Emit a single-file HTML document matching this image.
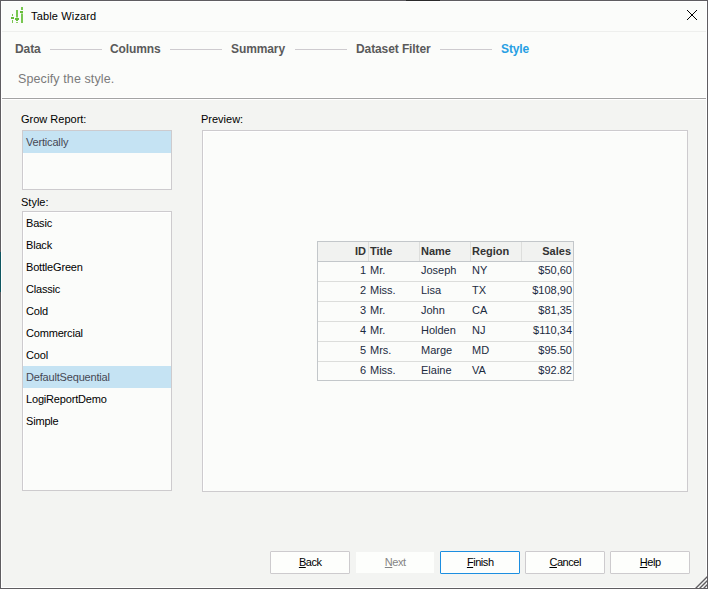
<!DOCTYPE html>
<html><head><meta charset="utf-8">
<style>
*{margin:0;padding:0;box-sizing:border-box}
html,body{width:708px;height:589px;overflow:hidden;background:#f3f4f2;font-family:"Liberation Sans",sans-serif;color:#000}
.abs{position:absolute}
#top{position:absolute;left:0;top:0;width:708px;height:98px;background:#fbfcfa}
#bl{left:0;top:0;width:1px;height:589px;background:#5f5d61}
#bt{left:0;top:0;width:708px;height:1px;background:#5f5d61}
#br{left:707px;top:0;width:1px;height:589px;background:#5f5d61}
#inner{left:1px;top:1px;width:706px;height:587px;border:1px solid #fff}
#tline{left:2px;top:31px;width:704px;height:1px;background:#eeefed}
#sep{left:1px;top:97px;width:706px;height:3px;background:#fff;border-top:1px solid #fff;border-bottom:1px solid #fff}
#sep::after{content:"";position:absolute;left:1px;top:0;width:704px;height:1px;background:#a3a3a3}
.title{left:31px;top:10px;font-size:11px;color:#000;letter-spacing:0.15px}
.step{top:42px;font-size:12px;font-weight:bold;color:#5a5a5a;letter-spacing:-0.1px}
.sline{top:49px;height:1px;width:52px;background:#cecbcf}
.spec{left:18px;top:72px;font-size:12.5px;color:#7a7a7a;letter-spacing:0.1px}
.lbl{font-size:11px;color:#000}
.list{background:#fbfcfa;border:1px solid #cdcbce;box-shadow:inset 1px 1px 0 #fff}
.item{position:absolute;left:0;font-size:11px;padding-left:3px;letter-spacing:-0.18px;height:22px;line-height:22px;width:148px}
.sel{background:#c5e3f3;color:#454854}
#preview{left:202px;top:130px;width:486px;height:362px;background:#fbfcfa;border:1px solid #cdcbce;box-shadow:inset 1px 1px 0 #fff}
table{position:absolute;left:317px;top:241px;border-collapse:collapse;font-size:11px;color:#1f2a44}
.btn{top:551px;width:80px;height:23px;border:1px solid #cdcbce;background:#fdfefc;font-size:11px;letter-spacing:-0.45px;text-indent:0.45px;text-align:center;line-height:21px;border-radius:1px;color:#000}
.btn u{text-decoration:underline;text-decoration-thickness:1px;text-underline-offset:0.5px}
#tbl{left:317px;top:241px;width:257px;height:140px;border:1px solid #c3c7ca;background:#fbfcfa}
#tbl .hdr{position:absolute;left:0;top:0;width:255px;height:20px;background:#f1f2f0;border-bottom:1px solid #c3c7ca}
#tbl .vl{position:absolute;top:0;width:1px;height:19px;background:#dddedc}
#tbl .hl{position:absolute;left:0;width:255px;height:1px;background:#dcdddb}
#tbl .c{position:absolute;height:19px;line-height:18px;font-size:11px;color:#1c2b3f;white-space:nowrap}
#tbl .b{font-weight:bold;color:#333}
#tbl .r{text-align:right}
</style></head><body>
<div id="top"></div>
<div class="abs" id="tline"></div>
<div class="abs" id="sep"></div>
<div class="abs" id="inner"></div>
<div class="abs" id="bt"></div>
<div class="abs" id="bl"></div>
<div class="abs" id="br"></div>
<svg class="abs" style="left:0;top:0" width="30" height="30" viewBox="0 0 30 30" shape-rendering="crispEdges">
<g fill="#78c750">
<rect x="12" y="14" width="1" height="2"/>
<rect x="11" y="17" width="3" height="2" fill="#66bd3a"/>
<rect x="12" y="20" width="1" height="3"/>
<rect x="16" y="10" width="2" height="7"/>
<rect x="16" y="17" width="2" height="1" fill="#b8e0a0"/>
<rect x="15" y="18" width="4" height="2" fill="#66bd3a"/>
<rect x="16" y="20" width="2" height="1" fill="#66bd3a"/>
<rect x="16" y="22" width="2" height="1" fill="#8fd06a"/>
<rect x="21" y="7" width="2" height="3"/>
<rect x="20" y="11" width="3" height="2" fill="#66bd3a"/>
<rect x="21" y="13" width="2" height="1" fill="#b8e0a0"/>
<rect x="21" y="14" width="2" height="9"/>
</g></svg>
<div class="abs title">Table Wizard</div>
<svg class="abs" style="left:686px;top:9px" width="12" height="12" viewBox="0 0 12 12"><path d="M1 1L11 11M11 1L1 11" stroke="#000" stroke-width="1"/></svg>

<div class="abs step" style="left:15px">Data</div>
<div class="abs sline" style="left:50px"></div>
<div class="abs step" style="left:110px">Columns</div>
<div class="abs sline" style="left:170px"></div>
<div class="abs step" style="left:231px">Summary</div>
<div class="abs sline" style="left:295px"></div>
<div class="abs step" style="left:356px">Dataset Filter</div>
<div class="abs sline" style="left:440px"></div>
<div class="abs step" style="left:501px;color:#279fe3">Style</div>
<div class="abs spec">Specify the style.</div>

<div class="abs lbl" style="left:21px;top:113px">Grow Report:</div>
<div class="abs list" style="left:22px;top:130px;width:150px;height:60px">
 <div class="item sel" style="top:0">Vertically</div>
</div>
<div class="abs lbl" style="left:21px;top:196px">Style:</div>
<div class="abs list" style="left:22px;top:211px;width:150px;height:280px">
 <div class="item" style="top:0px">Basic</div>
 <div class="item" style="top:22px">Black</div>
 <div class="item" style="top:44px">BottleGreen</div>
 <div class="item" style="top:66px">Classic</div>
 <div class="item" style="top:88px">Cold</div>
 <div class="item" style="top:110px">Commercial</div>
 <div class="item" style="top:132px">Cool</div>
 <div class="item sel" style="top:154px">DefaultSequential</div>
 <div class="item" style="top:176px">LogiReportDemo</div>
 <div class="item" style="top:198px">Simple</div>
</div>
<div class="abs lbl" style="left:201px;top:113px">Preview:</div>
<div class="abs" id="preview"></div>

<div class="abs" id="tbl">
<div class="hdr"></div>
<div class="vl" style="left:50px"></div><div class="vl" style="left:101px"></div><div class="vl" style="left:152px"></div><div class="vl" style="left:203px"></div>
<div class="hl" style="top:39px"></div><div class="hl" style="top:59px"></div><div class="hl" style="top:79px"></div><div class="hl" style="top:99px"></div><div class="hl" style="top:119px"></div>
<div class="c b r" style="left:0;top:0px;width:48px">ID</div><div class="c b" style="left:52px;top:0px">Title</div><div class="c b" style="left:103px;top:0px">Name</div><div class="c b" style="left:154px;top:0px">Region</div><div class="c b r" style="left:205px;top:0px;width:48px">Sales</div>
<div class="c r" style="left:0;top:19px;width:48px">1</div><div class="c" style="left:52px;top:19px">Mr.</div><div class="c" style="left:103px;top:19px">Joseph</div><div class="c" style="left:154px;top:19px">NY</div><div class="c r" style="left:205px;top:19px;width:49px">$50,60</div>
<div class="c r" style="left:0;top:39px;width:48px">2</div><div class="c" style="left:52px;top:39px">Miss.</div><div class="c" style="left:103px;top:39px">Lisa</div><div class="c" style="left:154px;top:39px">TX</div><div class="c r" style="left:205px;top:39px;width:49px">$108,90</div>
<div class="c r" style="left:0;top:59px;width:48px">3</div><div class="c" style="left:52px;top:59px">Mr.</div><div class="c" style="left:103px;top:59px">John</div><div class="c" style="left:154px;top:59px">CA</div><div class="c r" style="left:205px;top:59px;width:49px">$81,35</div>
<div class="c r" style="left:0;top:79px;width:48px">4</div><div class="c" style="left:52px;top:79px">Mr.</div><div class="c" style="left:103px;top:79px">Holden</div><div class="c" style="left:154px;top:79px">NJ</div><div class="c r" style="left:205px;top:79px;width:49px">$110,34</div>
<div class="c r" style="left:0;top:99px;width:48px">5</div><div class="c" style="left:52px;top:99px">Mrs.</div><div class="c" style="left:103px;top:99px">Marge</div><div class="c" style="left:154px;top:99px">MD</div><div class="c r" style="left:205px;top:99px;width:49px">$95.50</div>
<div class="c r" style="left:0;top:119px;width:48px">6</div><div class="c" style="left:52px;top:119px">Miss.</div><div class="c" style="left:103px;top:119px">Elaine</div><div class="c" style="left:154px;top:119px">VA</div><div class="c r" style="left:205px;top:119px;width:49px">$92.82</div>
</div>
<div class="abs btn" style="left:270px"><u>B</u>ack</div>
<div class="abs btn" style="left:355px;color:#858585;border-color:#f3f4f2"><u>N</u>ext</div>
<div class="abs btn" style="left:440px;border-color:#1c8ee0"><u>F</u>inish</div>
<div class="abs btn" style="left:525px"><u>C</u>ancel</div>
<div class="abs btn" style="left:610px"><u>H</u>elp</div>
<svg class="abs" style="left:690px;top:571px" width="18" height="18" viewBox="0 0 18 18">
<path d="M17.5 5.5L5.5 17.5M17.5 9.5L9.5 17.5M17.5 13.5L13.5 17.5" stroke="#5f5d61" stroke-width="1.4"/></svg>
<div class="abs" style="left:0;top:588px;width:708px;height:1px;background:#5f5d61"></div>
<div class="abs" style="left:406px;top:0;width:34px;height:1px;background:#2a2a2a"></div>
<div class="abs" style="left:0;top:252px;width:1px;height:40px;background:#0e5560"></div>
</body></html>
